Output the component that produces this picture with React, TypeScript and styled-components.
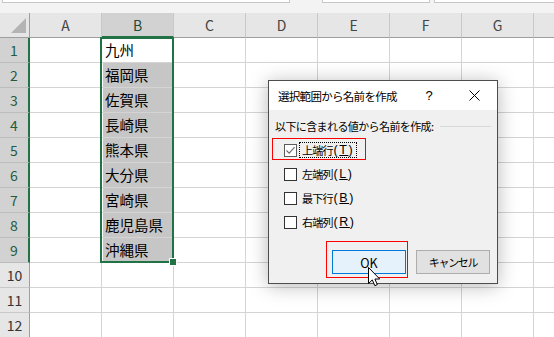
import React from 'react';
import styled, { createGlobalStyle } from 'styled-components';

const GlobalStyle = createGlobalStyle`
  html, body {
    margin: 0;
    padding: 0;
    background: #fff;
  }
  body {
    overflow: hidden;
    font-family: "Noto Sans CJK JP", "Noto Sans", sans-serif;
  }
`;

const COLUMNS = ['A', 'B', 'C', 'D', 'E', 'F', 'G', 'H'];
const VALUES = ['九州', '福岡県', '佐賀県', '長崎県', '熊本県', '大分県', '宮崎県', '鹿児島県', '沖縄県'];
const ROW_COUNT = 12;

const OPTIONS = [
	{ label: '上端行', key: 'T', checked: true },
	{ label: '左端列', key: 'L', checked: false },
	{ label: '最下行', key: 'B', checked: false },
	{ label: '右端列', key: 'R', checked: false },
];

const App = () => {
	return (
		<>
			<GlobalStyle />
			<Page>
				<TopStrip>
					<BarBox $left={2} $w={288} />
					<BarBox $left={32} $w={108} />
					<BarBox $left={4} $w={140} />
				</TopStrip>

				<Sheet>
					<Corner>
						<svg width="30" height="25" viewBox="0 0 30 25">
							<polygon points="26,5 26,20 11,20" fill="#b4b4b4" />
						</svg>
					</Corner>
					{COLUMNS.map((c) => (
						// column H is only partly on screen, its letter falls outside the window
						<ColHeader key={c} $selected={c === 'B'}>{c === 'H' ? '' : c}</ColHeader>
					))}
					{Array.from({ length: ROW_COUNT }).map((_, r) => (
						<React.Fragment key={r}>
							<RowHeader $selected={r < VALUES.length}>{r + 1}</RowHeader>
							{COLUMNS.map((c) => (
								<Cell key={c} $fill={c === 'B' && r > 0 && r < VALUES.length}>
									{c === 'B' ? VALUES[r] : null}
								</Cell>
							))}
						</React.Fragment>
					))}
					<SelectionFrame />
					<FillHandle />
				</Sheet>

				<Dialog>
					<TitleBar>
						<Title>選択範囲から名前を作成</Title>
						<HelpGlyph>?</HelpGlyph>
						<CloseButton>
							<svg width="11" height="11" viewBox="0 0 11 11">
								<path d="M0.5 0.5 L10.5 10.5 M10.5 0.5 L0.5 10.5" stroke="#000" strokeWidth="1" />
							</svg>
						</CloseButton>
					</TitleBar>
					<Body>
						<GroupHeader>
							<span>以下に含まれる値から名前を作成:</span>
							<GroupLine />
						</GroupHeader>
						<OptionList>
							{OPTIONS.map((o, i) => (
								<OptionRow key={o.key}>
									{i === 0 && <Marker $l={-12} $t={0} $w={94} $h={22} />}
									<CheckBox $checked={o.checked}>
										{o.checked && (
											<svg width="11" height="11" viewBox="0 0 11 11">
												<path d="M1.5 5.5 L4.2 8.2 L9.6 2.2" fill="none" stroke="#6a6a6a" strokeWidth="1.1" />
											</svg>
										)}
									</CheckBox>
									<OptionLabel $focused={i === 0}>
										{o.label}
										<Mnemonic>(<u>{o.key}</u>)</Mnemonic>
									</OptionLabel>
								</OptionRow>
							))}
						</OptionList>
						<ButtonRow>
							<ButtonSlot>
								<Marker $l={-6} $t={-9} $w={82} $h={37} />
								<DialogButton $primary>OK</DialogButton>
							</ButtonSlot>
							<ButtonSlot>
								<DialogButton $kana>キャンセル</DialogButton>
							</ButtonSlot>
						</ButtonRow>
					</Body>
				</Dialog>

				<Cursor width="13" height="20" viewBox="0 0 13 20">
					<path
						d="M0.5 0.5 L0.5 16.5 L4.3 12.9 L6.8 18.7 L9.3 17.6 L6.9 12 L11.7 12 Z"
						fill="#fff"
						stroke="#000"
						strokeWidth="1"
						strokeLinejoin="miter"
					/>
				</Cursor>
			</Page>
		</>
	);
};

const Page = styled.div`
position: relative;
width: 554px;
height: 337px;
overflow: hidden;
background: #fff;
`;

const TopStrip = styled.div`
display: flex;
height: 13px;
background: #f3f3f3;
`;

const BarBox = styled.div<{ $left: number; $w: number }>`
margin-left: ${(p) => p.$left}px;
width: ${(p) => p.$w}px;
height: 3px;
box-sizing: border-box;
background: #fff;
border: 1px solid #c6c6c6;
border-top: 0;
flex-shrink: 0;
`;

const Sheet = styled.div`
position: relative;
display: grid;
grid-template-columns: 30px repeat(8, 72px);
grid-auto-rows: 25px;
width: 606px;
`;

const Corner = styled.div`
box-sizing: border-box;
background: #e6e6e6;
border-right: 1px solid #9e9e9e;
border-bottom: 1px solid #9e9e9e;

svg {
	display: block;
}
`;

const ColHeader = styled.div<{ $selected?: boolean }>`
box-sizing: border-box;
display: flex;
align-items: center;
justify-content: center;
background: ${(p) => (p.$selected ? '#d2d2d2' : '#e6e6e6')};
border-right: 1px solid #c8c8c8;
border-bottom: ${(p) => (p.$selected ? '2px solid #217346' : '1px solid #9e9e9e')};
font-size: 14px;
color: ${(p) => (p.$selected ? '#1d4d36' : '#444')};
`;

const RowHeader = styled.div<{ $selected?: boolean }>`
box-sizing: border-box;
display: flex;
align-items: center;
justify-content: center;
background: ${(p) => (p.$selected ? '#d2d2d2' : '#e6e6e6')};
border-right: ${(p) => (p.$selected ? '2px solid #217346' : '1px solid #9e9e9e')};
border-bottom: 1px solid ${(p) => (p.$selected ? '#bcbcbc' : '#c8c8c8')};
font-size: 14px;
color: ${(p) => (p.$selected ? '#1f5c40' : '#333')};
`;

const Cell = styled.div<{ $fill?: boolean }>`
box-sizing: border-box;
border-right: 1px solid #d4d4d4;
border-bottom: 1px solid #d4d4d4;
background: ${(p) => (p.$fill ? '#c6c6c6' : '#fff')};
box-shadow: ${(p) => (p.$fill ? 'inset 1px 0 0 #fff' : 'none')};
padding-left: 3px;
font-size: 14.5px;
line-height: 24px;
color: #000;
white-space: nowrap;
overflow: hidden;
`;

const SelectionFrame = styled.div`
position: absolute;
left: 100px;
top: 24px;
width: 74px;
height: 226px;
box-sizing: border-box;
border: 2px solid #217346;
pointer-events: none;
`;

const FillHandle = styled.div`
position: absolute;
left: 169px;
top: 245px;
width: 8px;
height: 8px;
box-sizing: border-box;
background: #217346;
border: 1px solid #fff;
`;

const Dialog = styled.div`
position: absolute;
left: 268px;
top: 80px;
width: 230px;
height: 204px;
box-sizing: border-box;
display: flex;
flex-direction: column;
background: #f0f0f0;
border: 1px solid #4d4d4d;
box-shadow: 0 2px 18px rgba(0, 0, 0, 0.28);
font-family: "Noto Sans CJK JP", "Noto Sans", sans-serif;
color: #000;
`;

const TitleBar = styled.div`
display: flex;
align-items: center;
height: 29px;
padding: 0 5px 0 9px;
background: #fff;
`;

const Title = styled.div`
flex: 1;
font-size: 11.5px;
letter-spacing: -0.7px;
white-space: nowrap;
`;

const HelpGlyph = styled.div`
width: 24px;
margin-right: 15px;
text-align: center;
font-family: "Liberation Sans", sans-serif;
font-size: 13px;
`;

const CloseButton = styled.div`
display: flex;
justify-content: center;
width: 36px;

svg {
	display: block;
}
`;

const Body = styled.div`
flex: 1;
display: flex;
flex-direction: column;
padding: 8px 6px 9px 6px;
`;

const GroupHeader = styled.div`
display: flex;
align-items: center;
height: 16px;
font-size: 11px;
letter-spacing: -0.6px;
white-space: nowrap;
`;

const GroupLine = styled.div`
flex: 1;
height: 1px;
margin-left: 7px;
background: #d9d9d9;
`;

const OptionList = styled.div`
display: flex;
flex-direction: column;
margin-top: 4px;
padding-left: 9px;
`;

const OptionRow = styled.div`
position: relative;
display: flex;
align-items: center;
height: 24px;
`;

const Marker = styled.span<{ $l: number; $t: number; $w: number; $h: number }>`
position: absolute;
left: ${(p) => p.$l}px;
top: ${(p) => p.$t}px;
width: ${(p) => p.$w}px;
height: ${(p) => p.$h}px;
box-sizing: border-box;
border: 1px solid #ff0000;
pointer-events: none;
`;

const CheckBox = styled.div<{ $checked?: boolean }>`
display: flex;
align-items: center;
justify-content: center;
width: 13px;
height: 13px;
box-sizing: border-box;
background: #fff;
border: 1px solid ${(p) => (p.$checked ? '#5c5c5c' : '#333')};

svg {
	display: block;
}
`;

const OptionLabel = styled.div<{ $focused?: boolean }>`
display: flex;
align-items: center;
height: 16px;
margin-left: 2px;
padding: 0 2px;
box-sizing: border-box;
border: 1px dotted ${(p) => (p.$focused ? '#000' : 'transparent')};
font-size: 11px;
letter-spacing: -0.8px;
white-space: nowrap;
`;

const Mnemonic = styled.span`
margin-left: 1px;
font-family: "Liberation Sans", sans-serif;
font-size: 12.5px;
letter-spacing: 1.5px;
`;

const ButtonRow = styled.div`
display: flex;
justify-content: flex-end;
gap: 10px;
margin-top: auto;
padding-right: 1px;
`;

const ButtonSlot = styled.div`
position: relative;
`;

const DialogButton = styled.div<{ $primary?: boolean; $kana?: boolean }>`
display: flex;
align-items: center;
justify-content: center;
width: 74px;
height: 24px;
box-sizing: border-box;
border: 1px solid ${(p) => (p.$primary ? '#0078d7' : '#adadad')};
background: ${(p) => (p.$primary ? '#e5f1fb' : '#e1e1e1')};
font-size: ${(p) => (p.$kana ? '11px' : '12.5px')};
letter-spacing: ${(p) => (p.$kana ? '-1.3px' : '0')};
`;

const Cursor = styled.svg`
position: absolute;
left: 368px;
top: 267px;
`;

export default App;
